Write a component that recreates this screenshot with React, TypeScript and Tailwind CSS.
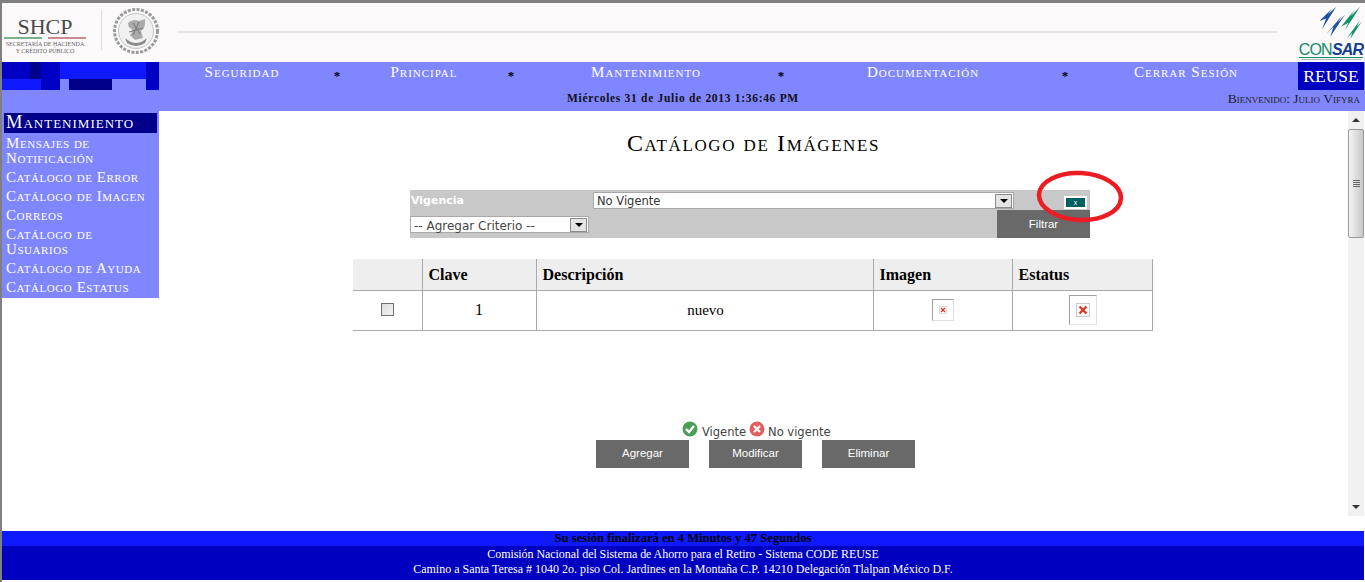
const serif = "font-['Liberation_Serif',serif]";
const caps = "font-['Liberation_Serif',serif] [font-variant-caps:small-caps]";

const navItems = [
  { label: "Seguridad", w: "w-[166px]" },
  { label: "Principal", w: "w-[150px]" },
  { label: "Mantenimiento", w: "w-[246px]" },
  { label: "Documentación", w: "w-[260px]" },
  { label: "Cerrar Sesión", w: "w-[218px]" },
];

const menuItems = [
  "Mensajes de Notificación",
  "Catálogo de Error",
  "Catálogo de Imagen",
  "Correos",
  "Catálogo de Usuarios",
  "Catálogo de Ayuda",
  "Catálogo Estatus",
];

const BrokenImage = ({ size }: { size: number }) => (
  <svg width={size} height={size} viewBox="0 0 16 16" className="block">
    <rect x="0.5" y="0.5" width="15" height="15" fill="#fff" stroke="#c4c4c4" />
    <path d="M4 4 L12 12 M12 4 L4 12" stroke="#e2301f" strokeWidth="2.6" />
  </svg>
);

const Seal = () => (
  <svg width="46" height="46" viewBox="0 0 46 46">
    <circle cx="23" cy="23" r="21.5" fill="none" stroke="#9a9a9a" strokeWidth="3" strokeDasharray="3 1.4" />
    <circle cx="23" cy="23" r="17.5" fill="#f1f1f1" stroke="#c4c4c4" />
    <path d="M12 30 Q23 40 34 30 L32 35 Q23 41 14 35 Z" fill="#8c8c8c" />
    <path d="M15 15 Q20 10 26 13 L32 11 Q33 20 28 23 L30 30 L22 32 L17 27 Q20 24 19 21 Q15 20 15 15 Z" fill="#ababab" />
    <path d="M20 15 L27 26 M26 14 L20 27 M16 24 L30 20" stroke="#777" strokeWidth="1" />
  </svg>
);

const ConsarMark = () => (
  <svg width="47" height="33" viewBox="0 0 56 40" className="block">
    <path d="M5 17 L20 2 L15 9 L25 0 L8 27 L13 14 Z" fill="#1f4f9c" />
    <path d="M13 33 L32 11 L27 19 L36 9 L18 36 L22 24 Z" fill="#1f4f9c" />
    <path d="M31 24 L47 4 L43 11 L54 0 L36 28 L40 19 Z" fill="#12925f" />
    <path d="M38 38 L54 16 L50 24 L56 18 L42 39 L45 31 Z" fill="#12925f" />
  </svg>
);

const ActionButton = ({ label, className = "" }: { label: string; className?: string }) => (
  <button className={`w-[93px] h-[28px] bg-[#696969] text-white text-[11.5px] font-['Liberation_Sans',sans-serif] ${className}`}>
    {label}
  </button>
);

const SelectArrow = () => (
  <span className="w-[17px] h-[14px] mr-[1px] bg-[#e4e4e4] border border-[#8a8a8a] flex items-center justify-center">
    <span className="w-0 h-0 border-x-[4px] border-x-transparent border-t-[4px] border-t-black" />
  </span>
);

const App = () => {
  return (
    <div className="w-[1365px] h-[582px] overflow-hidden bg-white flex flex-col border-t-[3px] border-l-2 border-[#808080]">
      {/* cabecera */}
      <header className="h-[59px] pr-[1px] bg-[#fbf9fa] flex items-start">
        <div className="w-[84px] pt-[15px] pl-[2px] text-center">
          <div className={`${serif} text-[#4a4a4a] text-[22px] leading-[18px]`}>SHCP</div>
          <div className="h-[2px] mt-[1px] flex gap-[6px]">
            <span className="w-[38px] bg-[#7fb08c]" />
            <span className="w-[38px] bg-[#c98a92]" />
          </div>
          <div className={`${serif} text-[#666] text-[6px] leading-[6.5px] mt-[2px] uppercase whitespace-nowrap`}>
            Secretaría de Hacienda
            <br />y Crédito Público
          </div>
        </div>
        <div className="w-[1px] h-[40px] mt-[7px] ml-[15px] bg-[#dcdcdc]" />
        <div className="ml-[11px] mt-[5px]">
          <Seal />
        </div>
        <div className="w-[1100px] h-[2px] ml-[18px] mt-[28px] bg-[#e4e4e4]" />
        <div className="ml-auto w-[66px] pt-[4px] flex flex-col items-center">
          <div className="pl-[14px]">
            <ConsarMark />
          </div>
          <div className="font-['Liberation_Sans',sans-serif] text-[16px] leading-[13px] mt-[3px] tracking-[-0.8px]">
            <span className="text-[#118a6a]">CON</span>
            <span className="text-[#123f90] font-bold italic">SAR</span>
          </div>
          <div className="w-[64px] h-[1px] mt-[1px] bg-[#118a6a]" />
          <div className="font-['Liberation_Sans',sans-serif] text-[2.4px] leading-[4px] text-[#333] whitespace-nowrap">
            Comisión Nacional del Sistema de Ahorro para el Retiro
          </div>
        </div>
      </header>

      {/* navegación */}
      <div className="h-[49px] bg-[#7f86ff] flex">
        <div className="w-[157px] shrink-0">
          <div className="h-[17px] flex">
            <span className="w-[28px] bg-[#0000c4]" />
            <span className="w-[11px] bg-[#00008b]" />
            <span className="w-[19px] bg-[#0000c4]" />
            <span className="w-[86px] bg-[#0f19ff]" />
            <span className="w-[13px] bg-[#0000c4]" />
          </div>
          <div className="h-[11px] flex">
            <span className="w-[39px] bg-[#0f19ff]" />
            <span className="w-[19px] bg-[#0000c4]" />
            <span className="w-[9px]" />
            <span className="w-[43px] bg-[#00008b]" />
            <span className="w-[34px]" />
            <span className="w-[13px] bg-[#0000c4]" />
          </div>
        </div>
        <div className="flex-1 flex flex-col">
          <div className="h-[28px] flex">
            <nav className={`${caps} flex text-white text-[15px] leading-[21px] tracking-[1px]`}>
              {navItems.map((item, i) => (
                <div key={item.label} className="flex">
                  <div className={`${item.w} text-center`}>{item.label}</div>
                  {i < navItems.length - 1 && (
                    <span className="w-[24px] pt-[3px] text-center text-black text-[13px] font-bold tracking-normal">*</span>
                  )}
                </div>
              ))}
            </nav>
            <div className={`${serif} ml-auto mr-[1px] w-[66px] bg-[#0000c0] text-white text-[17.5px] leading-[28px] text-center`}>
              REUSE
            </div>
          </div>
          <div className="h-[21px] flex items-start">
            <div className={`${serif} w-[1048px] pt-[1px] text-center text-[#111] text-[11.5px] leading-[15px] font-bold tracking-[0.7px] whitespace-nowrap`}>
              Miércoles 31 de Julio de 2013 1:36:46 PM
            </div>
            <div className={`${caps} ml-auto mr-[5px] text-[#222] text-[13.5px] leading-[17px] whitespace-nowrap`}>
              Bienvenido: Julio Vifyra
            </div>
          </div>
        </div>
      </div>

      {/* cuerpo */}
      <div className="h-[420px] flex">
        <aside className="w-[157px] h-[187px] shrink-0 bg-[#7f86ff] pt-[2px]">
          <div className={`${caps} mx-[2px] h-[20px] pl-[2px] bg-[#00008b] text-white text-[18.5px] leading-[19px] tracking-[1px]`}>
            Mantenimiento
          </div>
          <ul className={`${caps} pt-[1px] text-white text-[15px] leading-[15px] tracking-[0.55px]`}>
            {menuItems.map((item) => (
              <li key={item} className="pl-[4px] pr-[8px] py-[2px]">
                {item}
              </li>
            ))}
          </ul>
        </aside>

        <main className="flex-1 flex flex-col">
          <h1 className={`${caps} mt-[16px] text-center text-black text-[24px] leading-[32px] tracking-[1.6px]`}>
            Catálogo de Imágenes
          </h1>

          <div className="relative w-[680px] h-[48px] ml-[251px] mt-[31px] bg-[#c8c8c8]">
            <div className="flex">
              <div className="w-[183px] pl-[1px] pt-[3px] text-white font-bold text-[11px] leading-[15px] font-['DejaVu_Sans',sans-serif]">
                Vigencia
              </div>
              <div className="w-[421px] h-[17px] mt-[2px] bg-white border border-[#a8a8a8] flex items-center justify-between">
                <span className="pl-[3px] pt-[2px] text-[11.5px] text-[#333] font-['DejaVu_Sans',sans-serif]">No Vigente</span>
                <SelectArrow />
              </div>
              <div className="ml-[50px] mt-[6px] w-[23px] h-[13px] bg-white p-[2px]">
                <div className="h-full bg-[#005f5f] text-white text-[7px] leading-[9px] text-center font-['Liberation_Sans',sans-serif]">
                  x
                </div>
              </div>
            </div>
            <div className="flex items-end justify-between h-[29px]">
              <div className="w-[179px] h-[17px] mb-[5px] bg-white border border-[#a8a8a8] flex items-center justify-between">
                <span className="pl-[3px] pt-[2px] text-[12px] text-[#444] font-['DejaVu_Sans',sans-serif]">-- Agregar Criterio --</span>
                <SelectArrow />
              </div>
              <ActionButton label="Filtrar" className="pt-[2px]" />
            </div>
            {/* marca roja */}
            <svg width="90" height="56" viewBox="0 0 90 56" className="absolute left-[625px] top-[-20px]">
              <ellipse cx="45" cy="26.5" rx="41" ry="23.5" fill="none" stroke="#ed1c24" strokeWidth="4.5" transform="rotate(3 45 26)" />
            </svg>
          </div>

          <table className={`${serif} w-[800px] ml-[194px] mt-[21px] table-fixed border-collapse text-black`}>
            <thead>
              <tr className="h-[31px] bg-[#eeeeee] text-[16px] font-bold text-left border-b-[1px] border-[#a9a9a9]">
                <th className="w-[69px] pt-[1px] border-r border-[#a9a9a9]" />
                <th className="w-[114px] pl-[6px] pt-[1px] border-r border-[#a9a9a9]">Clave</th>
                <th className="w-[337px] pl-[6px] pt-[1px] border-r border-[#a9a9a9]">Descripción</th>
                <th className="w-[139px] pl-[6px] pt-[1px] border-r border-[#a9a9a9]">Imagen</th>
                <th className="pl-[6px] pt-[1px] border-r border-[#a9a9a9]">Estatus</th>
              </tr>
            </thead>
            <tbody>
              <tr className="h-[40px] text-[16px] text-center border-b border-[#a9a9a9]">
                <td className="border-r border-[#a9a9a9]">
                  <span className="block w-[13px] h-[13px] mx-auto mb-[1px] border border-[#707070] bg-gradient-to-br from-[#dcdcdc] to-[#f4f4f4]" />
                </td>
                <td className="border-r border-[#a9a9a9]">1</td>
                <td className="border-r border-[#a9a9a9] text-[15px] pl-[2px]">nuevo</td>
                <td className="border-r border-[#a9a9a9]">
                  <span className="w-[22px] h-[22px] mx-auto flex items-center justify-center border border-t-[#a0a0a0] border-l-[#a0a0a0] border-r-[#e0e0e0] border-b-[#e0e0e0]">
                    <BrokenImage size={8} />
                  </span>
                </td>
                <td className="border-r border-[#a9a9a9] pl-[2px]">
                  <span className="w-[28px] h-[30px] mx-auto flex items-center justify-center border border-t-[#a0a0a0] border-l-[#a0a0a0] border-r-[#e0e0e0] border-b-[#e0e0e0]">
                    <BrokenImage size={14} />
                  </span>
                </td>
              </tr>
            </tbody>
          </table>

          <div className="mt-[89px] ml-[523px] h-[20px] flex items-start text-[11.5px] text-[#444] font-['DejaVu_Sans',sans-serif] whitespace-nowrap">
            <svg width="16" height="16" viewBox="0 0 16 16" className="mt-[1px] mr-[4px]">
              <circle cx="8" cy="8" r="7.5" fill="#4a9e57" />
              <path d="M4 8 L7 11 L12 5" fill="none" stroke="#fff" strokeWidth="2.4" />
            </svg>
            <span className="leading-[24px]">Vigente</span>
            <svg width="16" height="16" viewBox="0 0 16 16" className="mt-[1px] ml-[3px] mr-[3px]">
              <circle cx="8" cy="8" r="7.5" fill="#e0605f" />
              <path d="M5 5 L11 11 M11 5 L5 11" stroke="#fff" strokeWidth="2.2" />
            </svg>
            <span className="leading-[24px]">No vigente</span>
          </div>

          <div className="flex gap-[20px] ml-[437px]">
            <ActionButton label="Agregar" />
            <ActionButton label="Modificar" />
            <ActionButton label="Eliminar" />
          </div>
        </main>

        {/* barra de desplazamiento */}
        <div className="w-[17px] pr-[1px] shrink-0">
          <div className="h-[405px] bg-[#f0f0f0] flex flex-col items-center">
            <span className="mt-[7px] w-0 h-0 border-x-[4px] border-x-transparent border-b-[4px] border-b-[#333]" />
            <div className="mt-[7px] w-full h-[109px] rounded-[2px] border border-[#9a9a9a] bg-gradient-to-r from-[#f4f4f4] to-[#c8c8c8] flex flex-col items-center justify-center gap-[1px]">
              <span className="w-[7px] h-[1px] bg-[#666]" />
              <span className="w-[7px] h-[1px] bg-[#666]" />
              <span className="w-[7px] h-[1px] bg-[#666]" />
              <span className="w-[7px] h-[1px] bg-[#666]" />
            </div>
            <span className="mt-auto mb-[7px] w-0 h-0 border-x-[4px] border-x-transparent border-t-[4px] border-t-[#333]" />
          </div>
        </div>
      </div>

      {/* pie */}
      <footer className={`${serif} mr-[1px] text-center text-[12px]`}>
        <div className="h-[15px] bg-[#0f19ff] text-black text-[12.6px] font-bold leading-[14px]">
          Su sesión finalizará en 4 Minutos y 47 Segundos
        </div>
        <div className="h-[34px] pt-[1px] bg-[#0000c0] text-white leading-[15px]">
          <div className="tracking-[-0.06px]">Comisión Nacional del Sistema de Ahorro para el Retiro - Sistema CODE REUSE</div>
          <div>Camino a Santa Teresa # 1040 2o. piso Col. Jardines en la Montaña C.P. 14210 Delegación Tlalpan México D.F.</div>
        </div>
      </footer>
    </div>
  );
};

export default App;
